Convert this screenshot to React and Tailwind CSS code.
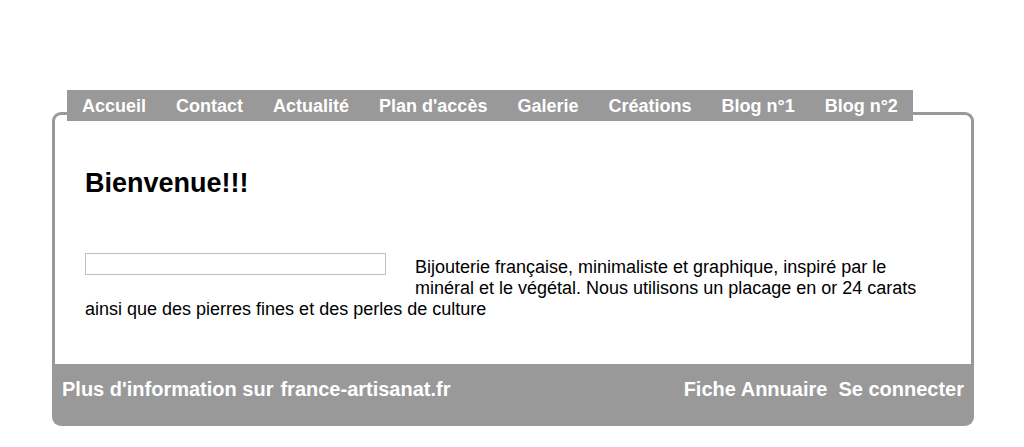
export default function App() {
  const nav = ["Accueil", "Contact", "Actualité", "Plan d'accès", "Galerie", "Créations", "Blog n°1", "Blog n°2"];
  return (
    <div className="w-[1024px] h-[447px] bg-white pt-[90px]" style={{ fontFamily: '"Liberation Sans", Arial, sans-serif' }}>
      <div className="ml-[52px] w-[922px]">
        <div className="relative z-10 ml-[15px] flex w-fit bg-[#999999]">
          {nav.map((n) => (
            <span key={n} className="px-[15px] h-[31px] flex items-center text-[18px] font-bold text-white leading-none">{n}</span>
          ))}
        </div>
        <div className="-mt-[9px] border-[3px] border-b-0 border-[#999999] rounded-t-[9px] bg-white px-[30px] pt-[53px] pb-[44px]">
          <h1 className="text-[27px] font-bold text-black leading-[31px]">Bienvenue!!!</h1>
          <div className="mt-[58px] text-[18px] leading-[21px] text-black">
            <div className="float-left w-[301px] h-[22px] border border-[#c0c0c0] mr-[29px] mb-[8px] -mt-[4px]"></div>
            Bijouterie française, minimaliste et graphique, inspiré par le minéral et le végétal. Nous utilisons un placage en or 24 carats ainsi que des pierres fines et des perles de culture
            <div className="clear-both"></div>
          </div>
        </div>
        <div className="h-[62px] bg-[#999999] rounded-b-[9px] px-[10px] pt-[14px] flex justify-between text-[20px] font-bold text-white leading-[23px]">
          <div className="flex gap-[7px]">
            <span>Plus d'information sur</span>
            <span>france-artisanat.fr</span>
          </div>
          <div className="flex gap-[11px]">
            <span>Fiche Annuaire</span>
            <span>Se connecter</span>
          </div>
        </div>
      </div>
    </div>
  );
}
